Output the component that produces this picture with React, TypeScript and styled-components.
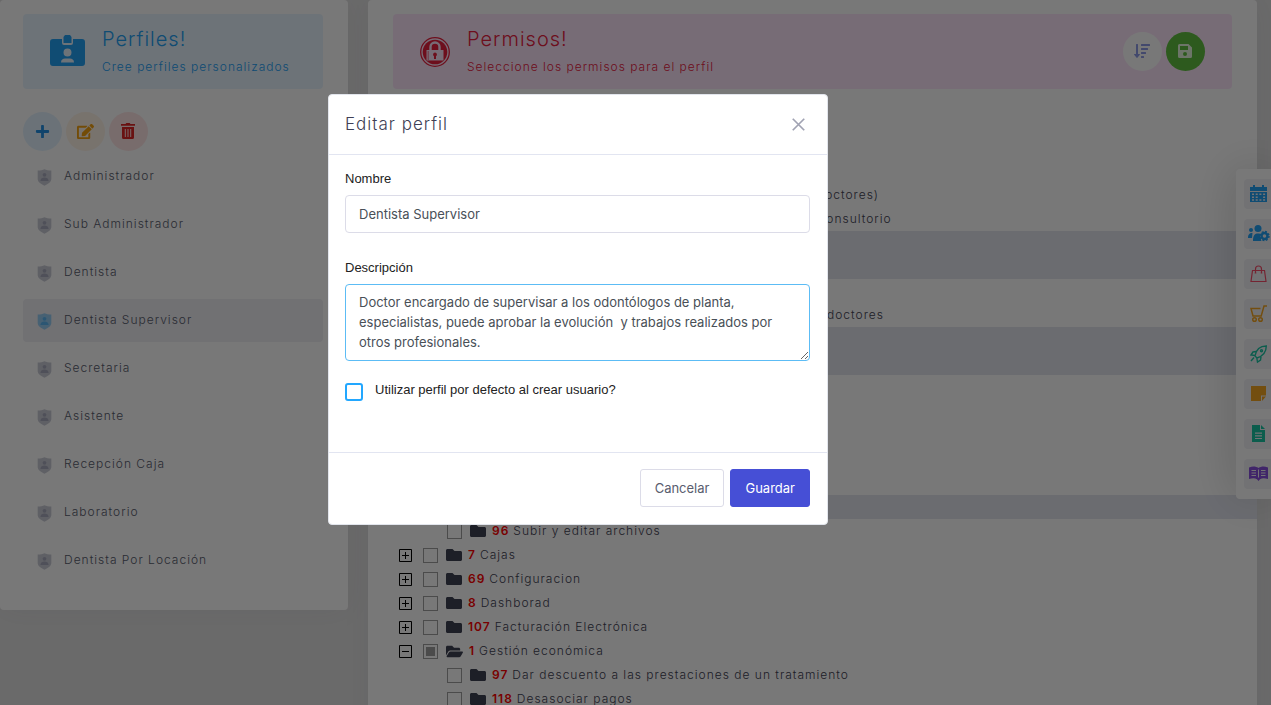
import React from 'react';
import styled, { createGlobalStyle, css } from 'styled-components';
import { FaPlus, FaEdit, FaFolder, FaFolderOpen, FaSortAmountDown } from 'react-icons/fa';

const GlobalStyle = createGlobalStyle`
  * { box-sizing: border-box; }
  html, body { margin: 0; height: 100%; overflow: hidden; }
  body {
    background: #e2e2e2;
    color: #3f4254;
    font-family: Inter, "Liberation Sans", sans-serif;
    font-size: 12px;
    font-weight: 400;
    letter-spacing: 1px;
  }
  button, input, textarea { font: inherit; letter-spacing: inherit; color: inherit; }
  button { cursor: pointer; padding: 0; border: 0; background: none; }
  h1, h2, h3, p, ul { margin: 0; padding: 0; font-weight: 300; }
  ul { list-style: none; }
`;

const Page = styled.div`
  display: flex;
  align-items: flex-start;
  gap: 20px;
  height: 100vh;
  padding-right: 14px;
  overflow: hidden;
`;

const Panel = styled.section<{ $side?: boolean }>`
  background: #fff;
  border-radius: 4px;
  padding: 14px 25px 28px;
  box-shadow: 0 0 30px rgba(82, 63, 105, 0.05);
  ${p => p.$side
    ? css`flex: 0 0 348px; padding-left: 23px;`
    : css`flex: 1; min-width: 0;`}
`;

const Banner = styled.header<{ $bg: string; $fg: string }>`
  display: flex;
  align-items: center;
  gap: 17px;
  height: 75px;
  padding: 0 27px;
  border-radius: 4px;
  background: ${p => p.$bg};
  color: ${p => p.$fg};
  svg { flex: none; }
`;

const BannerText = styled.div`
  flex: 1;
  h1 { font-size: 20px; line-height: 24px; }
  p { font-size: 12px; line-height: 20px; margin-top: 6px; }
`;

const Actions = styled.div`
  display: flex;
  gap: 4px;
`;

const RoundButton = styled.button<{ $bg: string; $fg: string }>`
  display: flex;
  align-items: center;
  justify-content: center;
  width: 39px;
  height: 39px;
  padding: 0 1px 1px 0;
  border-radius: 50%;
  background: ${p => p.$bg};
  color: ${p => p.$fg};
`;

const Toolbar = styled(Actions)`
  margin: 23px 0 4px;
`;

const ProfileList = styled.ul`
  display: flex;
  flex-direction: column;
  gap: 5px;
`;

const ProfileItem = styled.button<{ $active?: boolean }>`
  display: flex;
  align-items: center;
  gap: 12px;
  width: 100%;
  height: 43px;
  padding: 0 14px 2px;
  border-radius: 4px;
  text-align: left;
  color: #595d6e;
  background: ${p => (p.$active ? '#f0f0f5' : 'transparent')};
  svg { color: ${p => (p.$active ? '#5db8f5' : '#a9abbd')}; margin-top: 4px; }
`;

const Tree = styled.ul`
  margin: 22px -25px 0;
`;

const TreeRow = styled.li<{ $level: number; $marked?: boolean }>`
  display: flex;
  align-items: center;
  height: 24px;
  padding-left: ${p => (p.$level ? 79 : 31)}px;
  background: ${p => (p.$marked ? '#e4e6ef' : 'transparent')};
  white-space: nowrap;
  label { display: flex; align-items: center; }
  b { color: #f00; font-weight: 600; margin-right: 4px; }
  label svg { margin: 0 6px 0 8px; color: #3f4254; }
`;

const NodeText = styled.span`
  padding-bottom: 2px;
`;

const Expander = styled.button`
  display: flex;
  width: 13px;
  height: 13px;
  margin-right: 11px;
`;

const TreeCheck = styled.input`
  appearance: none;
  width: 15px;
  height: 15px;
  margin: 0;
  border: 1px solid #a0a0a0;
  &:indeterminate { background: #a0a0a0; box-shadow: inset 0 0 0 2px #fff; }
`;

const Dock = styled.nav`
  position: fixed;
  top: 169px;
  right: 0;
  display: flex;
  flex-direction: column;
  gap: 10px;
  padding: 10px 0 10px 8px;
  border-radius: 4px 0 0 4px;
  background: #fff;
  box-shadow: 0 0 50px rgba(0, 0, 0, 0.2);
`;

const DockButton = styled.button<{ $fg: string }>`
  display: flex;
  align-items: center;
  padding: 0 0 2px 6px;
  width: 27px;
  height: 30px;
  overflow: hidden;
  border-radius: 4px 0 0 4px;
  background: #f3f3f7;
  color: ${p => p.$fg};
  svg { flex: none; }
`;

const Backdrop = styled.div`
  position: fixed;
  inset: 0;
  display: flex;
  align-items: flex-start;
  justify-content: center;
  padding: 94px 115px 0 0;
  background: rgba(0, 0, 0, 0.53);
`;

const Dialog = styled.form`
  width: 500px;
  border: 1px solid #e2e5ec;
  border-radius: 4px;
  background: #fff;
`;

const DialogHeader = styled.header`
  display: flex;
  align-items: center;
  justify-content: space-between;
  height: 60px;
  padding: 0 22px 0 16px;
  border-bottom: 1px solid #e2e5f1;
  h2 { font-size: 17px; color: #3f3f55; line-height: 26px; padding-bottom: 2px; }
  button { display: flex; color: #a1a3b3; }
`;

const DialogBody = styled.div`
  height: 298px;
  padding: 14px 17px 0 16px;
  border-bottom: 1px solid #e2e5f1;
`;

const Field = styled.div`
  display: flex;
  flex-direction: column;
  gap: 6px;
  letter-spacing: normal;
  label {
    color: #222;
    font: 13px/20px "Liberation Sans", sans-serif;
  }
`;

const inputStyle = css`
  width: 100%;
  border: 1px solid #dcdce8;
  border-radius: 4px;
  padding: 7px 13px;
  color: #495057;
  font-size: 13px;
  line-height: 20px;
  outline: none;
`;

const TextInput = styled.input`
  ${inputStyle}
  height: 38px;
  margin-bottom: 25px;
`;

const TextArea = styled.textarea`
  ${inputStyle}
  height: 77px;
  border-color: #5cbcf5;
`;

const DefaultOption = styled.label`
  display: flex;
  align-items: flex-start;
  gap: 12px;
  margin-top: 19px;
  color: #222;
  font: 13px/20px "Liberation Sans", sans-serif;
  letter-spacing: normal;
  input {
    appearance: none;
    width: 18px;
    height: 18px;
    margin: 3px 0 0;
    border: 2px solid #22a7ff;
    border-radius: 3px;
  }
`;

const DialogFooter = styled.footer`
  display: flex;
  justify-content: flex-end;
  gap: 6px;
  padding: 16px 17px 17px;
`;

const FooterButton = styled.button<{ $primary?: boolean }>`
  height: 38px;
  padding: 0 14px 1px;
  border: 1px solid ${p => (p.$primary ? '#464fd6' : '#dcdce8')};
  border-radius: 3px;
  background: ${p => (p.$primary ? '#464fd6' : '#fff')};
  color: ${p => (p.$primary ? '#fff' : '#595d6e')};
  font-size: 13px;
  letter-spacing: normal;
`;

const BadgeIcon = () => (
  <svg width="35" height="33" viewBox="0 0 35 33" fill="currentColor">
    <path d="M3 4h9v4a2 2 0 0 0 2 2h7a2 2 0 0 0 2-2V4h9a3 3 0 0 1 3 3v21a3 3 0 0 1-3 3H3a3 3 0 0 1-3-3V7a3 3 0 0 1 3-3zm14.500 9.500a4 4 0 1 0 0 8 4 4 0 0 0 0-8zM11 27.500h13c0-3-2-4-4-4h-5c-2 0-4 1-4 4z" fillRule="evenodd" />
    <path d="M15 0h5l1.500 2v6h-8V2z" />
  </svg>
);

const LockIcon = () => (
  <svg width="30" height="30" viewBox="0 0 30 30">
    <circle cx="15" cy="15" r="14.300" fill="none" stroke="currentColor" strokeWidth="1.300" />
    <circle cx="15" cy="15" r="12.300" fill="currentColor" />
    <path d="M10.500 13V10a4.500 4.500 0 0 1 9 0V13" fill="none" stroke="#fde6fb" strokeWidth="2.400" />
    <path d="M6.500 13h17v10.500h-17z" fill="#fde6fb" />
    <path d="M8.200 14v9" stroke="currentColor" strokeWidth="0.600" />
    <path d="M15 15.500a2 2 0 0 1 1 3.700V22h-2v-2.800a2 2 0 0 1 1-3.700z" fill="currentColor" />
  </svg>
);

const SaveIcon = () => (
  <svg width="14" height="14" viewBox="0 0 14 14" fill="currentColor">
    <path fillRule="evenodd" d="M1.500 0h9L14 3.500v9a1.500 1.500 0 0 1-1.500 1.500h-11A1.500 1.500 0 0 1 0 12.500v-11A1.500 1.500 0 0 1 1.500 0zM2 2v4h8V2zm5 6a2 2 0 1 0 0 4 2 2 0 0 0 0-4z" />
  </svg>
);

const TrashIcon = () => (
  <svg width="14" height="16" viewBox="0 0 14 16" fill="currentColor">
    <path fillRule="evenodd" d="M0 1h4.500l.8-1h3.400l.8 1H14v1.800H0zM1 4h12v10.500a1.500 1.500 0 0 1-1.500 1.500h-9A1.500 1.500 0 0 1 1 14.500zm2.800 2v8h1V6zm2.700 0v8h1V6zm2.700 0v8h1V6z" />
  </svg>
);

const ShieldIcon = () => (
  <svg width="15" height="17" viewBox="0 0 15 17" fill="currentColor">
    <path opacity="0.600" d="M.7 1.500c3 0 4.800-.3 6.800-1.200 2 .9 3.800 1.200 6.800 1.200V10c0 3-3 5-6.800 6.700C3.700 15 .7 13 .7 10z" />
    <circle cx="7.500" cy="5.800" r="1.900" />
    <path d="M3.300 12c.3-2.600 1.900-3.600 4.200-3.600s3.900 1 4.200 3.600z" />
  </svg>
);

const BoxIcon = ({ open }: { open?: boolean }) => (
  <svg width="13" height="13" viewBox="0 0 13 13" fill="none" stroke="#000" strokeWidth="1">
    <path d={open ? 'M.5.5h12v12H.5zM3 6.500h7' : 'M.5.5h12v12H.5zM3 6.500h7M6.500 3v7'} />
  </svg>
);

const CloseIcon = () => (
  <svg width="13" height="13" viewBox="0 0 12 12" fill="none" stroke="currentColor" strokeWidth="1.600">
    <path d="M.7.7l10.600 10.600M11.300.7L.7 11.300" />
  </svg>
);

const dock = [
  { name: 'Agenda', color: '#22a1f5', art: (
    <path fill="currentColor" fillRule="evenodd" d="M0 2h3V0h2v2h7V0h2v2h3v4H0zM0 7h17v10H0zM2 8.500v1.500h2V8.500zm3.700 0v1.500h2V8.500zm3.700 0v1.500h2V8.500zm3.700 0v1.500h2V8.500zM2 11.500V13h2v-1.500zm3.700 0V13h2v-1.500zm7.400 0V13h2v-1.500zM2 14.300v1.500h2v-1.500zm3.700 0v1.500h2v-1.500zm3.700 0v1.500h2v-1.500zm3.700 0v1.500h2v-1.500z" />
  ) },
  { name: 'Pacientes', color: '#22a1f5', art: (
    <g fill="currentColor">
      <circle cx="8" cy="3.500" r="3.500" /><circle cx="1" cy="5" r="2" />
      <path d="M3 16c0-6 2-7.500 5-7.500 1.500 0 2.300.3 3 1L10 12l1.500 4zM-2 13c0-3 1-5 4.500-5L2 13z" />
      <circle cx="14.500" cy="11" r="3" fill="none" stroke="currentColor" strokeWidth="2.400" />
      <circle cx="14.500" cy="11" r="4.500" fill="none" stroke="currentColor" strokeWidth="1.400" strokeDasharray="2 1.530" />
    </g>
  ) },
  { name: 'Ventas', color: '#f64e6b', art: (
    <path fill="none" stroke="currentColor" strokeWidth="1.200" d="M2.500 5.500h12l1.500 11H1zM5.500 8.500V4a3 3 0 0 1 6 0v4.500M4.700 8h1.600M10.700 8h1.600" />
  ) },
  { name: 'Compras', color: '#f5a623', art: (
    <g fill="none" stroke="currentColor" strokeWidth="1.500">
      <path d="M17 1h-3l-2.800 10H3L1 3.500h9.500" /><circle cx="4.500" cy="14.500" r="1.800" /><circle cx="10.500" cy="14.500" r="1.800" />
    </g>
  ) },
  { name: 'Campañas', color: '#1bc5a5', art: (
    <g fill="none" stroke="currentColor" strokeWidth="1.400">
      <path d="M5 11C6 5 10 1 16.300 1 16.300 7 13 11 7 13zM6 6.500L3 7 1 10l4 .5M11 12l-.5 3-3 2-.7-4M4 12.500L1 16" /><circle cx="11.500" cy="5.800" r="1" />
    </g>
  ) },
  { name: 'Notas', color: '#f5a623', art: (
    <path fill="currentColor" d="M1 1h15v9.500h-5V16H1zM12 11.500h4L12 16z" />
  ) },
  { name: 'Documentos', color: '#1bc5a5', art: (
    <path fill="currentColor" fillRule="evenodd" d="M2 0h8v5h5v12H2zM11 0l4 4h-4zM5 7.500v1.200h7V7.500zm0 2.700v1.200h7v-1.200zm0 2.700v1.200h7v-1.200z" />
  ) },
  { name: 'Ayuda', color: '#8950e0', art: (
    <path fill="currentColor" fillRule="evenodd" d="M-1 2.500C3 1 6 1.500 8.500 3 11 1.500 14 1 18 2.500V14c-4-1-6-.8-8 .3L8.500 16 7 14.300c-2-1.100-4-1.300-8-.3zM8 4.500v8h1v-8zM1.500 5v1H6V5zm0 2.500v1H6v-1zm0 2.500v1H6v-1zM11 5v1h4.500V5zm0 2.500v1h4.500v-1zm0 2.500v1h4.500v-1z" />
  ) },
];

const profiles = [
  'Administrador', 'Sub Administrador', 'Dentista', 'Dentista Supervisor', 'Secretaria',
  'Asistente', 'Recepción Caja', 'Laboratorio', 'Dentista Por Locación',
];

type Node = { id?: number; text?: string; level: number; marked?: boolean; open?: boolean };

const nodes: Node[] = [
  { level: 0 },
  { level: 1 },
  { level: 1 },
  { id: 108, text: 'Ver y editar la agenda de todos los usuarios (doctores)', level: 1 },
  { id: 13, text: 'Ver y editar las agendas de todas las sillas del consultorio', level: 1 },
  { level: 1, marked: true },
  { level: 1, marked: true },
  { level: 1 },
  { id: 17, text: 'Ver y modificar el historial de citas de todos los doctores', level: 1 },
  { level: 1, marked: true },
  { level: 1, marked: true },
  { level: 0 },
  { level: 1 },
  { level: 1 },
  { level: 1 },
  { level: 1 },
  { level: 1, marked: true },
  { id: 96, text: 'Subir y editar archivos', level: 1 },
  { id: 7, text: 'Cajas', level: 0 },
  { id: 69, text: 'Configuracion', level: 0 },
  { id: 8, text: 'Dashborad', level: 0 },
  { id: 107, text: 'Facturación Electrónica', level: 0 },
  { id: 1, text: 'Gestión económica', level: 0, open: true },
  { id: 97, text: 'Dar descuento a las prestaciones de un tratamiento', level: 1 },
  { id: 118, text: 'Desasociar pagos', level: 1 },
];

const setPartial = (partial?: boolean) => (el: HTMLInputElement | null) => {
  if (el) el.indeterminate = !!partial;
};

export default function App() {
  return (
    <>
      <GlobalStyle />
      <Page>
        <Panel $side>
          <Banner $bg="#e8f4ff" $fg="#22a1f5">
            <BadgeIcon />
            <BannerText>
              <h1>Perfiles!</h1>
              <p>Cree perfiles personalizados</p>
            </BannerText>
          </Banner>
          <Toolbar>
            <RoundButton $bg="#e4f3ff" $fg="#2391e6" aria-label="Agregar"><FaPlus size={15} /></RoundButton>
            <RoundButton $bg="#fff4e8" $fg="#f5a110" aria-label="Editar"><FaEdit size={17} /></RoundButton>
            <RoundButton $bg="#ffe6e6" $fg="#e02828" aria-label="Eliminar"><TrashIcon /></RoundButton>
          </Toolbar>
          <ProfileList>
            {profiles.map(name => (
              <li key={name}>
                <ProfileItem $active={name === 'Dentista Supervisor'}>
                  <ShieldIcon />
                  {name}
                </ProfileItem>
              </li>
            ))}
          </ProfileList>
        </Panel>
        <Panel>
          <Banner $bg="#fde6fb" $fg="#e8203e">
            <LockIcon />
            <BannerText>
              <h1>Permisos!</h1>
              <p>Seleccione los permisos para el perfil</p>
            </BannerText>
            <Actions>
              <RoundButton $bg="#fff" $fg="#8f9be8" aria-label="Ordenar"><FaSortAmountDown size={16} /></RoundButton>
              <RoundButton $bg="#60c040" $fg="#e8f8e0" aria-label="Guardar permisos"><SaveIcon /></RoundButton>
            </Actions>
          </Banner>
          <Tree>
            {nodes.map((n, i) => (
              <TreeRow key={i} $level={n.level} $marked={n.marked}>
                {n.text && n.level === 0 && (
                  <Expander aria-label={n.text}><BoxIcon open={n.open} /></Expander>
                )}
                {n.text && (
                  <label>
                    <TreeCheck type="checkbox" ref={setPartial(n.open)} />
                    {n.open ? <FaFolderOpen size={17} /> : <FaFolder size={16} />}
                    <NodeText><b>{n.id}</b>{n.text}</NodeText>
                  </label>
                )}
              </TreeRow>
            ))}
          </Tree>
        </Panel>
      </Page>
      <Dock>
        {dock.map(d => (
          <DockButton key={d.name} $fg={d.color} aria-label={d.name}>
            <svg width="17" height="17" viewBox="0 0 17 17" overflow="visible">{d.art}</svg>
          </DockButton>
        ))}
      </Dock>
      <Backdrop>
        <Dialog role="dialog" aria-labelledby="dialog-title" onSubmit={e => e.preventDefault()}>
          <DialogHeader>
            <h2 id="dialog-title">Editar perfil</h2>
            <button type="button" aria-label="Cerrar"><CloseIcon /></button>
          </DialogHeader>
          <DialogBody>
            <Field>
              <label htmlFor="nombre">Nombre</label>
              <TextInput id="nombre" defaultValue="Dentista Supervisor" />
            </Field>
            <Field>
              <label htmlFor="descripcion">Descripción</label>
              <TextArea
                id="descripcion"
                defaultValue="Doctor encargado de supervisar a los odontólogos de planta, especialistas, puede aprobar la evolución  y trabajos realizados por otros profesionales."
              />
            </Field>
            <DefaultOption>
              <input type="checkbox" />
              Utilizar perfil por defecto al crear usuario?
            </DefaultOption>
          </DialogBody>
          <DialogFooter>
            <FooterButton type="button">Cancelar</FooterButton>
            <FooterButton type="submit" $primary>Guardar</FooterButton>
          </DialogFooter>
        </Dialog>
      </Backdrop>
    </>
  );
}
